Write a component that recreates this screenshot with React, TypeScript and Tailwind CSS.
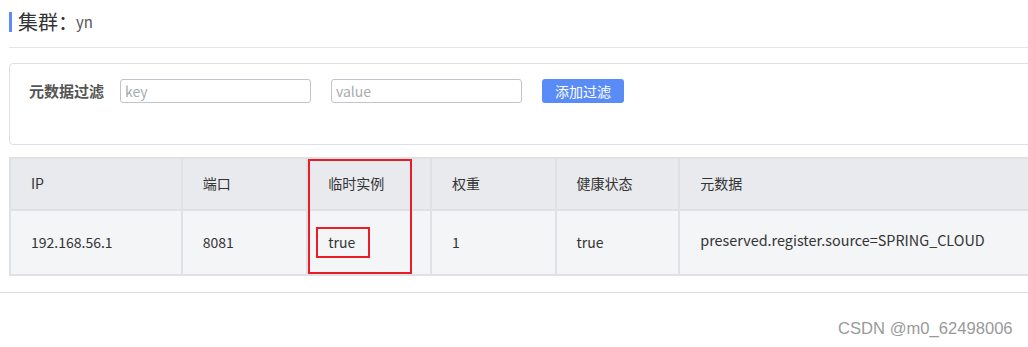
import React from "react";

const font = { fontFamily: '"Microsoft YaHei", "Noto Sans CJK SC", "Noto Sans", sans-serif' };

export default function App() {
  const headers = ["IP", "端口", "临时实例", "权重", "健康状态", "元数据"];
  const widths = ["w-[172px]", "w-[126px]", "w-[124px]", "w-[125px]", "w-[124px]", "w-[369px]"];
  return (
    <div
      className="relative w-[1028px] h-[347px] overflow-hidden bg-white text-[14px] text-[#333]"
      style={font}
    >
      <div className="pl-[9px]">
        <div className="mt-[12px] flex h-[20px] items-center border-l-[3px] border-[#5b8cf7] pl-[6px]">
          <span className="text-[20px] leading-[20px] text-[#333]">集群：</span>
          <span className="ml-[-2px] text-[15px] leading-[20px] text-[#555]">yn</span>
        </div>
        <div className="mt-[15px] border-t border-[#e5e6e8]" />
        <div className="mt-[15px] h-[82px] w-[1040px] rounded-[4px] border border-[#dcdfe6] pl-[19px] pt-[15px]">
          <div className="flex items-center">
            <span className="w-[91px] text-[15px] font-bold text-[#555]">元数据过滤</span>
            <input
              placeholder="key"
              className="h-[24px] w-[191px] rounded-[3px] border border-[#c0c4cc] px-[4px] text-[14px] text-[#333] outline-none placeholder:text-[#a8abb2]"
            />
            <input
              placeholder="value"
              className="ml-[20px] h-[24px] w-[191px] rounded-[3px] border border-[#c0c4cc] px-[4px] text-[14px] text-[#333] outline-none placeholder:text-[#a8abb2]"
            />
            <button className="ml-[20px] h-[24px] w-[82px] rounded-[3px] bg-[#5a8cf8] text-[14px] text-white">
              添加过滤
            </button>
          </div>
        </div>
        <div className="relative mt-[12px] w-[1040px]">
          <table className="table-fixed border-collapse">
            <thead>
              <tr className="h-[52px] bg-[#e9eaee]">
                {headers.map((h, i) => (
                  <th
                    key={h}
                    className={`${widths[i]} border-2 border-[#e0e1e5] pl-[20px] pb-[2px] text-left font-normal`}
                  >
                    {h}
                  </th>
                ))}
              </tr>
            </thead>
            <tbody>
              <tr className="h-[65px] bg-[#f4f5f7]">
                <td className="border-2 border-[#e0e1e5] pl-[20px]">192.168.56.1</td>
                <td className="border-2 border-[#e0e1e5] pl-[20px]">8081</td>
                <td className="border-2 border-[#e0e1e5] pl-[20px]">true</td>
                <td className="border-2 border-[#e0e1e5] pl-[20px]">1</td>
                <td className="border-2 border-[#e0e1e5] pl-[20px]">true</td>
                <td className="border-2 border-[#e0e1e5] pl-[20px] align-top pt-[18px] text-[14.4px]">
                  preserved.register.source=SPRING_CLOUD
                </td>
              </tr>
            </tbody>
          </table>
          <div className="absolute left-[299px] top-[2px] h-[115px] w-[104px] border-2 border-[#e81d28]" />
          <div className="absolute left-[307px] top-[70px] h-[31px] w-[54px] border-2 border-[#e81d28]" />
        </div>
      </div>
      <div className="mt-[16px] border-t border-[#dcdcdc]" />
      <div
        className="absolute left-[838px] top-[320px] text-[16.6px] leading-[18px] text-[#9a9a9a]"
        style={{ fontFamily: '"Liberation Sans", Arial, sans-serif' }}
      >
        CSDN @m0_62498006
      </div>
    </div>
  );
}
